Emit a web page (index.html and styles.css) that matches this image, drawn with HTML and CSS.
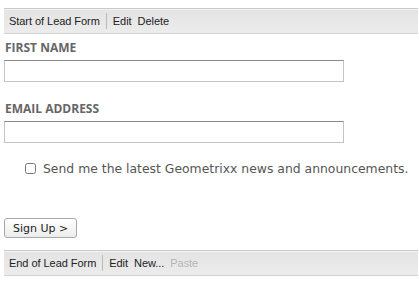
FILE: index.html
```html
<!DOCTYPE html>
<html lang="en">
<head>
    <meta charset="UTF-8">
    <meta name="viewport" content="width=device-width, initial-scale=1.0">
    <title>Lead Form</title>
    <link rel="stylesheet" href="styles.css">
</head>
<body>

<div class="editbar">
    <span class="editbar-title">Start of Lead Form</span>
    <span class="editbar-sep"></span>
    <span class="editbar-action">Edit</span>
    <span class="editbar-action">Delete</span>
</div>

<form class="leadform">
    <label class="field-label" for="firstName">FIRST NAME</label>
    <input class="field-input" type="text" id="firstName">

    <label class="field-label" for="email">EMAIL ADDRESS</label>
    <input class="field-input" type="text" id="email">

    <div class="optin">
        <input class="optin-box" type="checkbox" id="news">
        <label class="optin-text" for="news">Send me the latest Geometrixx news and announcements.</label>
    </div>

    <button class="signup" type="button">Sign Up &gt;</button>
</form>

<div class="editbar editbar-end">
    <span class="editbar-title">End of Lead Form</span>
    <span class="editbar-sep"></span>
    <span class="editbar-action">Edit</span>
    <span class="editbar-action">New...</span>
    <span class="editbar-action disabled">Paste</span>
</div>

</body>
</html>
```

FILE: styles.css
```css
body {
    margin: 0;
    padding-top: 8px;
    font-family: "Liberation Sans", Arial, sans-serif;
    background: #fff;
}

.editbar {
    display: flex;
    align-items: center;
    height: 24px;
    margin: 0 1px 0 4px;
    padding: 0 5px;
    border-top: 1px solid #c9c9c9;
    border-bottom: 1px solid #d2d2d2;
    background: linear-gradient(#e3e3e3, #ececec);
    box-shadow: inset 0 1px 0 #f3f3f3;
    font-size: 11px;
    letter-spacing: -0.05px;
    color: #222;
}

.editbar-sep {
    width: 1px;
    height: 16px;
    background: #bbb;
    margin: 0 6px;
}

.editbar-action {
    margin-right: 6px;
}

.editbar-action.disabled {
    color: #b5b5b5;
}

.editbar-end {
    margin-top: 12px;
}

.leadform {
    padding: 5px 0 0 4px;
}

.field-label {
    display: block;
    font-family: "Open Sans", sans-serif;
    font-weight: bold;
    font-size: 12px;
    color: #666;
    padding-left: 1px;
    margin-bottom: 4px;
}

.field-input {
    display: block;
    box-sizing: border-box;
    width: 340px;
    height: 22px;
    margin: 0 0 18px 0;
    border: 1px solid #c4c4c4;
    border-top-color: #8a8a8a;
    padding: 2px 4px;
}

.optin {
    display: flex;
    align-items: center;
    margin: 5px 0 0 20px;
}

.optin-box {
    width: 11px;
    height: 11px;
    margin: 0 7px 0 1px;
}

.optin-text {
    font-family: "DejaVu Sans", sans-serif;
    font-size: 12.4px;
    color: #555;
}

.signup {
    display: block;
    margin-top: 42px;
    height: 20px;
    padding: 0 8px;
    border: 1px solid #a8a8a8;
    border-radius: 3px;
    background: linear-gradient(#fff, #ececec);
    font-family: "DejaVu Sans", sans-serif;
    font-size: 11px;
    color: #222;
}
```
